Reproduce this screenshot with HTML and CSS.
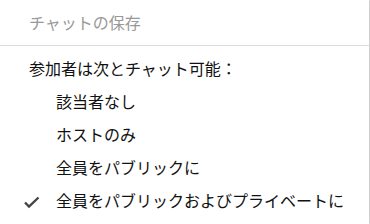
FILE: index.html
```html
<!DOCTYPE html>
<html lang="ja">
<head>
    <meta charset="UTF-8">
    <title>チャットメニュー</title>
    <link rel="stylesheet" href="styles.css">
</head>
<body>
    <div class="menu">
        <div class="menu-titulo">チャットの保存</div>
        <div class="menu-grupo">
            <div class="menu-rotulo">参加者は次とチャット可能：</div>
            <div class="menu-item">該当者なし</div>
            <div class="menu-item">ホストのみ</div>
            <div class="menu-item">全員をパブリックに</div>
            <div class="menu-item marcado">
                <svg class="check" width="18" height="16" viewBox="0 0 18 16">
                    <path d="M2 8.5 L6 12.5 L15.5 3.5" fill="none" stroke="#444" stroke-width="2.4"/>
                </svg>
                全員をパブリックおよびプライベートに
            </div>
        </div>
    </div>
</body>
</html>
```

FILE: styles.css
```css
* {
    margin: 0;
    padding: 0;
    box-sizing: border-box;
}

body {
    font-family: "Noto Sans CJK JP", "Noto Sans", sans-serif;
    background: #fafafa;
    color: #111;
    font-size: 16px;
}

.menu {
    width: 369px;
    height: 224px;
    background: white;
    box-shadow: 1px 0 2px rgba(0,0,0,0.25);
}

.menu-titulo {
    height: 46px;
    line-height: 45px;
    padding-left: 29px;
    color: #999;
    border-bottom: 1px solid #ddd;
}

.menu-grupo {
    padding-top: 6px;
}

.menu-rotulo,
.menu-item {
    height: 33px;
    line-height: 33px;
    padding-left: 29px;
    position: relative;
}

.menu-item {
    padding-left: 56px;
}

.check {
    position: absolute;
    left: 23px;
    top: 10px;
}
```
